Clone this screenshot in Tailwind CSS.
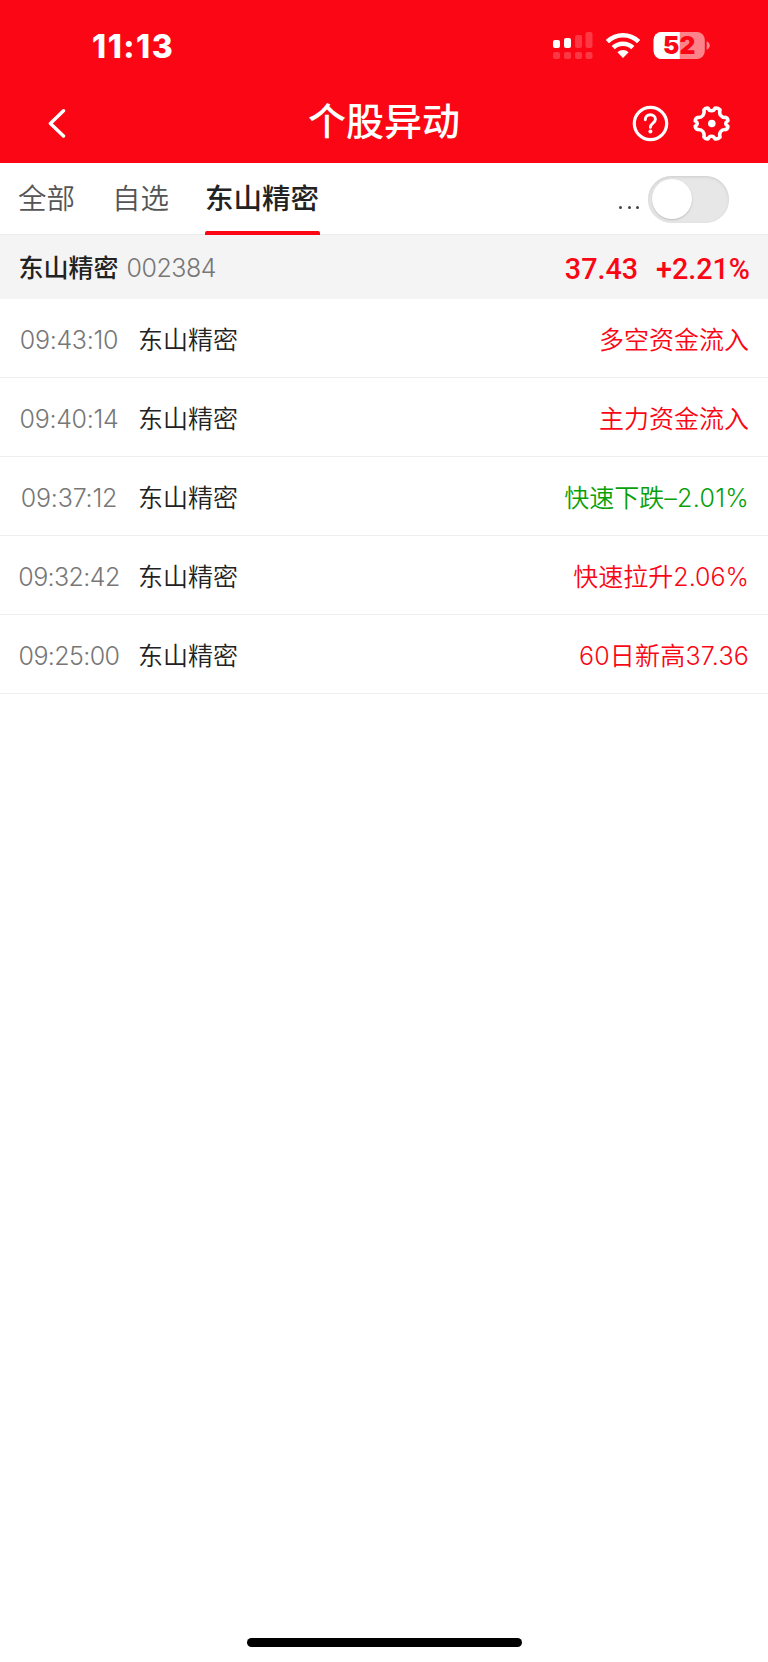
<!DOCTYPE html>
<html lang="zh-CN">
<head>
<meta charset="utf-8">
<title>个股异动</title>
<script src="https://cdn.jsdelivr.net/npm/@tailwindcss/browser@4"></script>
</head>
<body class="bg-white">
<div class="flex h-[1662px] w-[768px] flex-col overflow-hidden bg-white font-['Inter','Noto_Sans_CJK_SC',sans-serif]">
  <header class="h-[163px] shrink-0 bg-[#fa0614] text-white">
    <div class="flex h-[84px] items-start justify-between pt-[30px] pr-[58px] pl-[92px]">
      <div class="text-[32px] leading-[33px] font-extrabold tracking-[1.5px]">11:13</div>
      <div class="flex items-start">
        <svg class="mt-[2px] mr-[13px] h-[27px] w-[40px]" viewBox="0 0 40 27" fill="#fff">
          <rect x="0" y="8" width="7" height="8" rx="2"/>
          <rect x="11" y="6" width="7" height="10" rx="2"/>
          <g opacity=".2">
            <rect x="22" y="3" width="7" height="13" rx="2"/>
            <rect x="32.5" y="0" width="7" height="16" rx="2"/>
            <rect x="0" y="20" width="7" height="7" rx="2"/>
            <rect x="11" y="20" width="7" height="7" rx="2"/>
            <rect x="22" y="20" width="7" height="7" rx="2"/>
            <rect x="32.5" y="20" width="7" height="7" rx="2"/>
          </g>
        </svg>
        <svg class="mt-[2px] mr-[13px] h-[27px] w-[34px]" viewBox="0 0 34 27" fill="none" stroke="#fff" stroke-width="4.6">
          <path d="M1.4 9.6a22.3 22.3 0 0 1 31.2 0"/>
          <path d="M7.2 15.6a14.2 14.2 0 0 1 19.6 0"/>
          <path d="M17 26l-5.6-5.7a8 8 0 0 1 11.2 0z" fill="#fff" stroke="none"/>
        </svg>
        <svg class="mt-[2px] h-[27px] w-[57px]" viewBox="0 0 57 27">
          <defs><clipPath id="b"><rect x=".6" width="51.2" height="27" rx="8"/></clipPath></defs>
          <g clip-path="url(#b)"><rect width="52" height="27" fill="#fff" fill-opacity=".5"/><rect width="26.7" height="27" fill="#fff"/></g>
          <path d="M53.6 9.3c4.3 1.4 4.3 7 0 8.4z" fill="#fff" fill-opacity=".5"/>
          <text x="26.2" y="22.4" text-anchor="middle" font-family="Inter" font-weight="900" font-size="24.5" fill="#fa0614">52</text>
        </svg>
      </div>
    </div>
    <div class="grid h-[79px] grid-cols-[1fr_auto_1fr] items-start">
      <svg class="mt-[25px] ml-[48px] h-[29px] w-[18px]" viewBox="0 0 18 29" fill="none" stroke="#fff" stroke-width="3.4" stroke-linecap="round" stroke-linejoin="round"><path d="M15.5 1.8L2.4 14.4l13.1 12.6"/></svg>
      <h1 class="mt-[9px] text-[38px] leading-[56px] font-medium">个股异动</h1>
      <div class="mt-[21px] mr-[38px] flex justify-end gap-[24px]">
        <svg class="h-[37px] w-[37px]" viewBox="0 0 37 37" fill="none" stroke="#fff" stroke-width="3.2"><circle cx="18.5" cy="18.5" r="16.2"/><path d="M13.3 14.7c0-3 2.1-4.9 5.1-4.9s5 1.8 5 4.4c0 4.1-5 3.8-5 8.2" stroke-width="2.9" stroke-linecap="round"/><circle cx="18.4" cy="26.4" r="2" fill="#fff" stroke="none"/></svg>
        <svg class="h-[37px] w-[37px]" viewBox="0 0 37 37" fill="none" stroke="#fff" stroke-width="3.6" stroke-linejoin="round"><path d="M10.9 4.9Q12.5 2.5 15.2 3.2C16.2 6.6 20.8 6.6 21.8 3.2Q24.5 2.5 27 4.9C25.8 9.4 28.3 12.8 32.7 12.4Q35.2 13.3 34.8 16C32 17.4 32 19.6 34.8 21Q35.2 23.7 32.7 24.6C28.3 24.2 25.8 27.6 27 32.1Q24.5 34.5 21.8 33.8C20.8 30.4 16.2 30.4 15.2 33.8Q12.5 34.5 10.9 32.1C11.8 27.6 9.3 24.2 4.9 24.6Q2.2 23.7 2.2 21C5 19.6 5 17.4 2.2 16Q2.2 13.3 4.9 12.4C9.3 12.8 11.8 9.4 10.9 4.9Z"/><circle cx="18.8" cy="18.5" r="3.8" fill="#fff" stroke="none"/></svg>
      </div>
    </div>
  </header>
  <nav class="flex h-[72px] shrink-0 items-start border-b border-[#ececec] pr-[39px] pl-[18px] text-[28.5px] leading-[42px] text-[#555]">
    <div class="mt-[15px] font-[350]">全部</div>
    <div class="mt-[15px] ml-[37px] font-[350]">自选</div>
    <div class="ml-[35.5px] flex h-[72px] w-[115px] flex-col items-center justify-between pt-[15px] font-medium text-[#222]"><span>东山精密</span><span class="h-[4px] w-full rounded-t-[2px] bg-[#fa0614]"></span></div>
    <div class="mt-[42.5px] ml-auto flex gap-[5.3px]"><i class="size-[3px] rounded-full bg-[#444]"></i><i class="size-[3px] rounded-full bg-[#444]"></i><i class="size-[3px] rounded-full bg-[#444]"></i></div>
    <div class="mt-[13px] ml-[9px] h-[47px] w-[81px] rounded-full bg-[#e7e7e7] pt-[3px] pl-[4px] shadow-[inset_0_1px_3px_#ccc]"><div class="size-[40px] rounded-full bg-white shadow-[0_1px_2px_#bbb]"></div></div>
  </nav>
  <section class="flex h-[64px] shrink-0 items-center justify-between bg-[#f4f4f4] pt-[3px] pr-[18px] pl-[18.5px]">
    <div class="flex items-center text-[25px] leading-[36px]"><span class="-mt-[2px] font-medium text-[#222]">东山精密</span><span class="-mt-[2px] ml-[8px] font-[350] tracking-[-0.5px] text-[#777]">002384</span></div>
    <div class="flex gap-[18px] font-['Roboto'] text-[28.7px] leading-[36px] font-medium text-[#fa0614]"><span>37.43</span><span>+2.21%</span></div>
  </section>
  <main class="text-[25px] leading-[36px] font-[350] text-[#222]">
    <div class="flex h-[79px] items-center border-b border-[#efefef] px-[19px] pt-[3px]"><span class="flex w-[100px] justify-center tracking-[-0.3px] whitespace-nowrap text-[#777]">09:43:10</span><span class="ml-[19px]">东山精密</span><span class="ml-auto text-[#fa0614]">多空资金流入</span></div>
    <div class="flex h-[79px] items-center border-b border-[#efefef] px-[19px] pt-[3px]"><span class="flex w-[100px] justify-center tracking-[-0.3px] whitespace-nowrap text-[#777]">09:40:14</span><span class="ml-[19px]">东山精密</span><span class="ml-auto text-[#fa0614]">主力资金流入</span></div>
    <div class="flex h-[79px] items-center border-b border-[#efefef] px-[19px] pt-[3px]"><span class="flex w-[100px] justify-center tracking-[-0.2px] whitespace-nowrap text-[#777]">09:37:12</span><span class="ml-[19px]">东山精密</span><span class="ml-auto text-[#089f08]">快速下跌<span class="tracking-[0.3px]">–2.01%</span></span></div>
    <div class="flex h-[79px] items-center border-b border-[#efefef] px-[19px] pt-[3px]"><span class="flex w-[100px] justify-center tracking-[-0.6px] whitespace-nowrap text-[#777]">09:32:42</span><span class="ml-[19px]">东山精密</span><span class="ml-auto text-[#fa0614]">快速拉升2.06%</span></div>
    <div class="flex h-[79px] items-center border-b border-[#efefef] px-[19px] pt-[3px]"><span class="flex w-[100px] justify-center tracking-[-0.6px] whitespace-nowrap text-[#777]">09:25:00</span><span class="ml-[19px]">东山精密</span><span class="ml-auto tracking-[0.2px] text-[#fa0614]">60日新高37.36</span></div>
  </main>
  <div class="mx-auto mt-auto mb-[15px] h-[9px] w-[275px] rounded-full bg-black"></div>
</div>
</body>
</html>
